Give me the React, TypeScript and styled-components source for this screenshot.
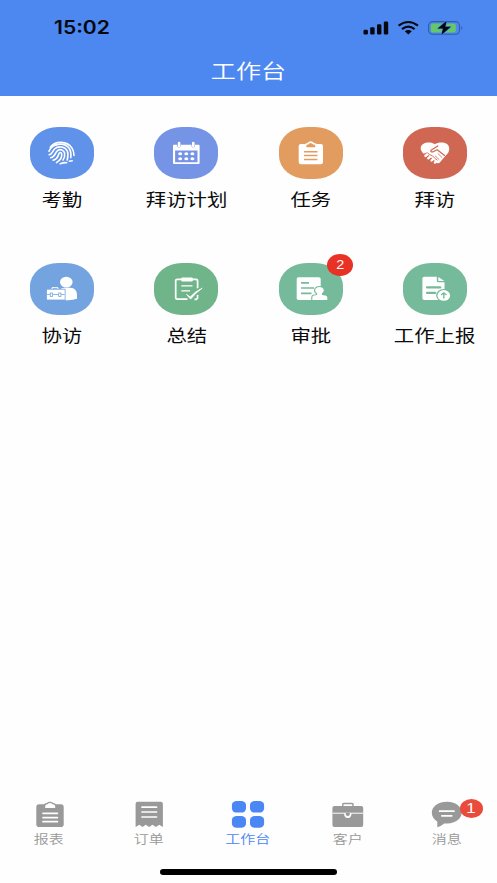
import React from "react";
import styled, { createGlobalStyle } from "styled-components";

const GlobalStyle = createGlobalStyle`
  * { box-sizing: border-box; }
  body { margin: 0; background: #fefefe; }
`;

const Screen = styled.div`
  display: flex;
  flex-direction: column;
  width: 497px;
  height: 883px;
  overflow: hidden;
  background: #fefefe;
  font-family: "Noto Sans CJK SC", sans-serif;
`;

const Header = styled.header`
  height: 95.5px;
  background: #4d87f0;
`;

const StatusBar = styled.div`
  display: flex;
  align-items: center;
  justify-content: space-between;
  height: 48px;
  padding: 7px 33.5px 0 53.5px;
`;

const Clock = styled.span`
  font: 600 18px/22px Inter, sans-serif;
  color: #05090f;
  transform: scaleX(1.17);
  transform-origin: left center;
`;

const Title = styled.h1`
  margin: 0;
  font-size: 20.6px;
  font-weight: 350;
  line-height: 44px;
  text-align: center;
  color: #fff;
  transform: scaleX(1.22);
`;

const Grid = styled.main`
  display: grid;
  grid-template-columns: repeat(4, 1fr);
  grid-auto-rows: 136px;
  flex: 1;
  padding-top: 31.5px;
`;

const Entry = styled.div`
  display: flex;
  flex-direction: column;
  align-items: center;
`;

const Tile = styled.div<{ $color: string }>`
  position: relative;
  width: 64px;
  height: 52px;
  border-radius: 28px / 23px;
  background: ${(p) => p.$color};
  color: ${(p) => p.$color};
`;

const Art = styled.svg`
  display: block;
`;

const EntryLabel = styled.span`
  margin-top: 7px;
  font-size: 16.8px;
  line-height: 26px;
  white-space: nowrap;
  color: #0b0b0b;
  transform: scaleX(1.215);
`;

const Badge = styled.span<{ $x: number; $y: number; $w: number; $h: number; $color: string }>`
  position: absolute;
  left: ${(p) => p.$x}px;
  top: ${(p) => p.$y}px;
  display: flex;
  align-items: center;
  justify-content: center;
  width: ${(p) => p.$w}px;
  height: ${(p) => p.$h}px;
  border-radius: 50%;
  background: ${(p) => p.$color};
  color: #fff;
`;

const BadgeText = styled.span<{ $size: number }>`
  font: 400 ${(p) => p.$size}px/1 "Liberation Sans", sans-serif;
  transform: scaleX(1.2);
`;

const TabBar = styled.nav`
  display: grid;
  grid-template-columns: repeat(5, 1fr);
  height: 70px;
`;

const Tab = styled.div<{ $active?: boolean }>`
  position: relative;
  display: flex;
  flex-direction: column;
  align-items: center;
  color: ${(p) => (p.$active ? "#4a86f4" : "#999")};
`;

const TabLabel = styled.span`
  margin-top: -0.5px;
  font-size: 12.3px;
  font-weight: 350;
  line-height: 20px;
  white-space: nowrap;
  transform: translateX(-0.6px) scaleX(1.22);
`;

const HomeArea = styled.footer`
  display: flex;
  justify-content: center;
  height: 14px;
`;

const HomeBar = styled.div`
  width: 177px;
  height: 5.5px;
  border-radius: 3px;
  background: #000;
`;

const StatusIcons = () => (
  <Art width="101" height="18" viewBox="0 0 101 18">
    <g fill="#05090f">
      <rect x="0.5" y="10.7" width="4.4" height="4.8" rx="1.2" />
      <rect x="7.2" y="8.3" width="4.4" height="7.2" rx="1.2" />
      <rect x="14" y="5.3" width="4.4" height="10.2" rx="1.2" />
      <rect x="20.8" y="2.5" width="4.4" height="13" rx="1.2" />
      <path d="M41.8 12.3 45.3 15.6 48.8 12.3Q45.3 9.9 41.8 12.3Z" />
    </g>
    <path d="M39 10.1Q45.3 5.3 51.6 10.1M35.6 6.7Q45.3-.7 55 6.7" fill="none" stroke="#05090f" strokeWidth="2.1" />
    <rect x="65.6" y="2.6" width="30.9" height="12.7" rx="4" fill="none" stroke="#315da8" strokeWidth="1.1" />
    <rect x="67.8" y="4.5" width="25" height="8.9" rx="2.2" fill="#65c767" />
    <path d="M98.2 6.7Q100.4 8.8 98.2 11.1Z" fill="#315da8" />
    <path d="M83.7 1.8 74.7 9.6H80L78.4 16 87.8 7.8H82.3Z" fill="#05090f" stroke="#4d87f0" strokeWidth="1.4" paintOrder="stroke" strokeLinejoin="round" />
  </Art>
);

const Fingerprint = () => (
  <g fill="none" stroke="#fff" strokeWidth="1.6" strokeLinecap="round">
    <path d="M20.3 20.2C25 13.7 37 13.5 42 21.1Q44 24.3 44 28.4" />
    <path d="M19 24.3C22 16.2 34.2 14.9 38.9 21.1Q41.5 24.5 40.8 30.7" />
    <path d="M19.1 27.7C22.4 27.5 22 24.7 24.5 22C28.4 18.2 35.4 19.8 37.4 24.2Q38.6 27.4 37.2 33" />
    <path d="M20.7 30.7C25.6 29.8 24.7 26.1 27.3 23.8C30.2 21.5 34 23 34.6 26Q35.2 30.2 33 33.1" />
    <path d="M23.2 33.3C28 31.9 27.9 29.1 28.7 27.1Q29.8 24.4 31.6 26.4C32.3 29.9 30.2 33.4 26.5 35.6" />
    <path d="M30.2 36.8Q34.6 35.2 36.6 35.8M39.3 34.2 42.2 33.8" />
  </g>
);

const Calendar = () => (
  <g>
    <path fill="#fff" fillRule="evenodd" d="M19.8 17.8H23.2V19.2Q24.9 22 26.7 19.2V17.8H37.5V19.2Q39.3 22 41 19.2V17.8H44.8Q45.6 17.8 45.6 18.8V36Q45.6 37 44.6 37H20Q19 37 19 36V18.8Q19 17.8 19.8 17.8ZM21.1 23.6V35.2H43.5V23.6Z" />
    <rect x="23.8" y="14.8" width="2.6" height="5.4" rx="1.3" fill="#fff" />
    <rect x="38" y="14.8" width="2.6" height="5.4" rx="1.3" fill="#fff" />
    {[26.2, 32.3, 38.4].map((x) => (
      <React.Fragment key={x}>
        <ellipse cx={x} cy="26.7" rx="2" ry="1.5" fill="#fff" />
        <ellipse cx={x} cy="31.7" rx="2" ry="1.5" fill="#fff" />
      </React.Fragment>
    ))}
  </g>
);

const Task = () => (
  <g>
    <rect x="19.7" y="17.1" width="24.3" height="20.1" rx="2.2" fill="#fff" />
    <path d="M26 20V17.2Q26.4 16 28.3 15.9Q31.7 12.4 35.2 15.9Q37.6 16 37.7 17.4V20Z" fill="#fff" />
    <path d="M27.4 20.3V18.6Q27.5 17.7 29.2 17.6Q31.7 14.6 34.2 17.6Q36.2 17.7 36.3 18.6V20.3Z" fill="currentColor" />
    <path d="M25 24.7H38.5M25 28.6H38.5M25 32.4H38.5" stroke="currentColor" strokeWidth="1.5" />
  </g>
);

const Handshake = () => (
  <g>
    <path d="M31.8 17.3C27.8 14.1 17.7 14.9 17.7 21.3Q17.7 24.5 21.2 27.2L24.3 27.1 34.4 36.2Q36 36.8 37 35.2L41.9 29.4C45.2 26.4 46.4 24.5 46.2 21C45.8 14.8 36.2 14.1 31.8 17.3Z" fill="#fff" />
    <path d="M34.8 18.9 28 23.2Q27.1 25.3 30.2 24.8L34.2 22.8 41.6 28.4" fill="none" stroke="currentColor" strokeWidth="1.2" strokeLinecap="round" strokeLinejoin="round" />
    <path d="M35 26.6 38.9 30.4M32.2 28.9 36 32.5" fill="none" stroke="currentColor" strokeWidth=".8" strokeLinecap="round" />
    <path d="M20.6 27 24.3 25.8 26.8 27.7 29.6 28.9 31.6 31.1 34.4 33.3" fill="none" stroke="currentColor" strokeWidth=".9" />
    <path d="M22.4 28.9 24 27.8M25.3 31.2 27 29.9M28.6 33.4 30 32.3M31.9 35.5 33.2 34.5" stroke="#fff" strokeWidth="2.4" strokeLinecap="round" />
  </g>
);

const Assist = () => (
  <g>
    <ellipse cx="36.3" cy="19.1" rx="6.3" ry="5.4" fill="#fff" />
    <path d="M29.8 26.3Q32 24.4 36.3 24.8H40C44.9 24.8 47 28.4 47 32V35.8Q41.5 37.8 34.2 37Z" fill="#fff" />
    <rect x="16.5" y="26.2" width="18.6" height="10.8" fill="#fff" stroke="currentColor" strokeWidth=".8" />
    <path d="M22 26V24.7H28V26" fill="none" stroke="#fff" strokeWidth="1" />
    <path d="M17 31.5H20.2M22.7 31.5H28.5M31 31.5H34.6" stroke="currentColor" strokeWidth=".8" />
    <rect x="20.3" y="30" width="2.2" height="3.5" fill="#fff" stroke="currentColor" strokeWidth=".8" />
    <rect x="28.7" y="30" width="2.2" height="3.5" fill="#fff" stroke="currentColor" strokeWidth=".8" />
  </g>
);

const Summary = () => (
  <g fill="none" stroke="#fff" strokeWidth="1.7">
    <path d="M33.5 36.2H23.3Q21.7 36.2 21.7 34.8V17.6Q21.7 16.4 23.2 16.4H42Q43.6 16.4 43.6 17.7V25.2M43.6 32V35L42.3 36.3H40.5" />
    <rect x="27.3" y="14.4" width="11.5" height="4.2" rx="1" fill="#fff" stroke="none" />
    <path d="M27.3 22.9H38.5M27.3 27.8H36" strokeWidth="1.3" />
    <path d="M32.5 31.4 36.2 33.9Q41 28.5 48.2 25.2Q41 30.2 36.6 36.1Z" fill="#fff" strokeWidth=".8" />
  </g>
);

const personPath =
  "M38.3 30.5C34.6 28.2 36 24 40.5 24S46.4 28.2 42.8 30.5Q42.3 32 44.3 32.3L46.5 32.5Q48.3 32.9 48.3 34.4V37H33.3V34.4Q33.3 32.9 34.8 32.5L36.8 32.3Q38.8 32 38.3 30.5Z";

const Approval = () => (
  <g>
    <rect x="17.7" y="14.3" width="24" height="22.7" rx="1.8" fill="#fff" />
    <path d="M22 19.8H30M22 25H35M22 30.3H32.5" stroke="currentColor" strokeWidth="1.7" />
    <path d={personPath} fill="currentColor" stroke="currentColor" strokeWidth="2.2" />
    <path d={personPath} fill="#fff" />
  </g>
);

const Report = () => (
  <g>
    <path d="M21.4 13.7H33.8V17.7Q33.8 19.3 35.6 19.3H41.5V35Q41.5 37 39.4 37H21.4Q19.4 37 19.4 35.3V15.3Q19.4 13.7 21.4 13.7ZM35.3 13.9 41.3 18.1H36.3Q35.3 18.1 35.3 17.2Z" fill="#fff" />
    <path d="M24 24.4H37.3M24 29.8H32.2" stroke="currentColor" strokeWidth="2.2" strokeLinecap="round" />
    <ellipse cx="40.8" cy="32.4" rx="7.6" ry="6.4" fill="currentColor" />
    <ellipse cx="40.8" cy="32.4" rx="6.3" ry="5.3" fill="#fff" />
    <path d="M40.8 35.6V30.2M38.1 32 40.8 29.8 43.5 32" fill="none" stroke="currentColor" strokeWidth="1.4" />
  </g>
);

const entries = [
  { label: "考勤", color: "#6192e9", Icon: Fingerprint },
  { label: "拜访计划", color: "#7594e6", Icon: Calendar },
  { label: "任务", color: "#e29c5f", Icon: Task },
  { label: "拜访", color: "#cf6753", Icon: Handshake },
  { label: "协访", color: "#74a4df", Icon: Assist },
  { label: "总结", color: "#70b48a", Icon: Summary },
  { label: "审批", color: "#75ba9a", Icon: Approval, badge: "2" },
  { label: "工作上报", color: "#75ba9a", Icon: Report },
];

const StatsIcon = () => (
  <g>
    <rect x="6.3" y="5.2" width="27.4" height="22.8" rx="2.8" fill="currentColor" />
    <path d="M14 8.2V5.8Q14.4 4.4 16.6 4.1Q20 1.2 23.3 4.1Q25.7 4.3 25.9 5.8V8.2Z" fill="currentColor" />
    <path d="M15.2 9V7Q15.4 5.5 17.4 5.3Q20.1 2.8 22.7 5.3Q25 5.5 25.2 7V9Z" fill="#fefefe" />
    <path d="M13 14.3H27.4M13 18.6H27.4M13 22.7H27.4" stroke="#fefefe" strokeWidth="1.7" strokeLinecap="round" />
  </g>
);
const OrderIcon = () => (
  <g>
    <path d="M8.8 2.8H31.6Q33.9 2.8 33.9 4.8V28L30.1 25.8 27 28 23.4 25.8 20.2 28 16.7 25.8 13.5 28 10.3 25.8 6.6 28V4.8Q6.6 2.8 8.8 2.8Z" fill="currentColor" />
    <path d="M13 8.2H27.5M13 13H27.5M13 18H27.5" stroke="#fefefe" strokeWidth="1.7" strokeLinecap="round" />
  </g>
);
const AppsIcon = () => (
  <g fill="currentColor">
    {[3.9, 22].map((x) => [2, 17.1].map((y) => <rect key={`${x}-${y}`} x={x} y={y} width="14.1" height="11.6" rx="4.8" ry="4" />))}
  </g>
);
const ClientIcon = () => (
  <g>
    <path d="M14.8 7.8V5.2Q14.8 4.5 16 4.5H23.8Q25 4.5 25 5.2V7.8" fill="none" stroke="currentColor" strokeWidth="1.4" />
    <rect x="4.4" y="7" width="30.8" height="21" rx="2" fill="currentColor" />
    <path d="M4.4 14.2H35.2" stroke="#fefefe" strokeWidth="1" />
    <path d="M16.2 14.2H23.4V16Q22.7 19.1 19.8 19.1T16.2 16Z" fill="#fefefe" />
    <path d="M17.9 13.7H21.7V16.1Q19.8 18 17.9 16.1Z" fill="currentColor" />
  </g>
);
const ChatIcon = () => (
  <g>
    <path d="M20 2.7C28.2 2.7 34.7 7.4 34.7 13.6S28.2 24.5 20.5 24.5H17.2Q14.4 27 10.3 28.2V22.5C6.7 20.5 4.8 17.2 4.8 13.6C4.8 7.4 11.6 2.7 20 2.7Z" fill="currentColor" />
    <path d="M12.6 12.2H27M14.8 16.8H24.8" stroke="#fefefe" strokeWidth="1.7" strokeLinecap="round" />
  </g>
);

const tabs = [
  { label: "报表", Icon: StatsIcon },
  { label: "订单", Icon: OrderIcon },
  { label: "工作台", Icon: AppsIcon, active: true },
  { label: "客户", Icon: ClientIcon },
  { label: "消息", Icon: ChatIcon, badge: "1" },
];

export default function App() {
  return (
    <>
      <GlobalStyle />
      <Screen>
        <Header>
          <StatusBar>
            <Clock>15:02</Clock>
            <StatusIcons />
          </StatusBar>
          <Title>工作台</Title>
        </Header>
        <Grid>
          {entries.map(({ label, color, Icon, badge }) => (
            <Entry key={label}>
              <Tile $color={color}>
                <Art width="64" height="52" viewBox="0 0 64 52"><Icon /></Art>
                {badge && (
                  <Badge $x={48.5} $y={-9} $w={25.5} $h={21.5} $color="#e93226">
                    <BadgeText $size={12}>{badge}</BadgeText>
                  </Badge>
                )}
              </Tile>
              <EntryLabel>{label}</EntryLabel>
            </Entry>
          ))}
        </Grid>
        <TabBar>
          {tabs.map(({ label, Icon, active, badge }) => (
            <Tab key={label} $active={active}>
              <Art width="40" height="30" viewBox="0 0 40 30"><Icon /></Art>
              <TabLabel>{label}</TabLabel>
              {badge && (
                <Badge $x={62.2} $y={-0.3} $w={23} $h={19} $color="#e94b3c">
                  <BadgeText $size={14}>{badge}</BadgeText>
                </Badge>
              )}
            </Tab>
          ))}
        </TabBar>
        <HomeArea><HomeBar /></HomeArea>
      </Screen>
    </>
  );
}
